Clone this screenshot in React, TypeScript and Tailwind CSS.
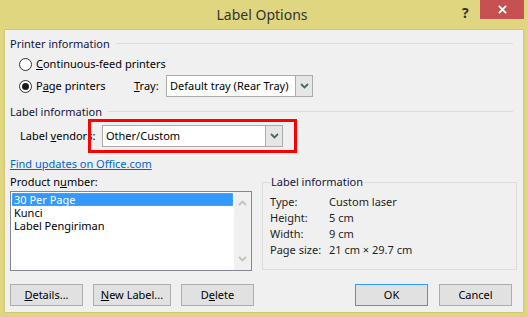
import React from "react";

const Chevron = ({ className = "" }: { className?: string }) => (
  <svg width="9" height="6" viewBox="0 0 9 6" className={className}>
    <path d="M1 1 L4.5 4.5 L8 1" fill="none" stroke="currentColor" strokeWidth="1.8" />
  </svg>
);

const Select = ({ text, width }: { text: string; width: string }) => (
  <div className={`flex h-[22px] ${width} items-stretch border border-[#acacac] bg-white`}>
    <div className="flex flex-1 items-center whitespace-nowrap pl-[3px] text-black">{text}</div>
    <div className="flex w-[17px] items-center justify-center border-l border-[#acacac] bg-[#e6e6e6] text-[#456b5a]">
      <Chevron />
    </div>
  </div>
);

const Heading = ({ children }: { children: React.ReactNode }) => (
  <div className="flex h-[16px] items-center pl-[5px] pr-[10px]">
    <span className="whitespace-nowrap leading-none text-[#14143c]">{children}</span>
    <div className="ml-[6px] h-px flex-1 bg-[#dcdcdc]" />
  </div>
);

const Radio = ({ checked }: { checked?: boolean }) => (
  <div className="flex h-[13px] w-[13px] shrink-0 items-center justify-center rounded-full border border-[#333] bg-white">
    {checked && <div className="h-[7px] w-[7px] rounded-full bg-[#1a1a1a]" />}
  </div>
);

const Btn = ({ children, w, primary }: { children: React.ReactNode; w: string; primary?: boolean }) => (
  <div
    className={`flex h-[22px] ${w} items-center justify-center whitespace-nowrap border ${
      primary ? "border-[#3399ff]" : "border-[#adadad]"
    } bg-[#e1e1e1] text-black`}
  >
    {children}
  </div>
);

export default function App() {
  return (
    <div
      className="flex h-[317px] w-[528px] flex-col bg-[#dfd67f] text-[11px] text-black"
      style={{ fontFamily: "'Noto Sans', sans-serif" }}
    >
      {/* title bar */}
      <div className="relative flex h-[29px] items-center justify-center">
        <span className="ml-[-4px] text-[14px] text-[#333333]">Label Options</span>
        <span className="absolute left-[462px] top-[2px] text-[14px] font-bold text-[#333]">?</span>
        <div className="absolute left-[480px] top-0 flex h-[19px] w-[44px] items-center justify-center bg-[#c75050] text-white">
          <svg width="9" height="9" viewBox="0 0 10 10">
            <path d="M1 1 L9 9 M9 1 L1 9" stroke="white" strokeWidth="2" />
          </svg>
        </div>
      </div>

      {/* client area */}
      <div className="mx-[4px] flex h-[284px] flex-col border border-[#cfc676] bg-[#f0f0f0]">
        <div className="mt-[5px]">
          <Heading>Printer information</Heading>
        </div>

        <div className="mt-[3px] flex h-[20px] items-center whitespace-nowrap pl-[14px]">
          <Radio />
          <span className="ml-[4px]">
            <u>C</u>ontinuous-feed printers
          </span>
        </div>

        <div className="mt-[1px] flex h-[22px] items-center whitespace-nowrap pl-[14px]">
          <Radio checked />
          <span className="ml-[4px] w-[98px]">
            P<u>a</u>ge printers
          </span>
          <span className="w-[32px]">
            <u>T</u>ray:
          </span>
          <Select text="Default tray (Rear Tray)" width="w-[147px]" />
        </div>

        <div className="mt-[6px]">
          <Heading>Label information</Heading>
        </div>

        <div className="relative flex h-[34px] items-center whitespace-nowrap pl-[15px]">
          <span className="w-[82px]">
            Label <u>v</u>endors:
          </span>
          <Select text="Other/Custom" width="w-[181px]" />
          <div className="pointer-events-none absolute left-[83px] top-0 h-[34px] w-[209px] border-[3px] border-[#ff0000]" />
        </div>

        <div className="mt-[3px] flex h-[16px] items-center pl-[5px]">
          <span className="text-[#0066cc] underline">Find updates on Office.com</span>
        </div>

        <div className="mt-[2px] flex">
          {/* left column */}
          <div className="ml-[5px] flex w-[242px] flex-col">
            <div className="flex h-[16px] items-center whitespace-nowrap">
              Product n<u>u</u>mber:
            </div>
            <div className="mt-px flex h-[80px] border border-[#828790] bg-white">
              <div className="flex flex-1 flex-col p-px leading-[12px]">
                <div className="flex h-[13px] items-center border border-dotted border-[#e08a2a] bg-[#3399ff] pl-[1px] leading-[11px] text-white">
                  30 Per Page
                </div>
                <div className="flex h-[13px] items-center pl-[2px]">Kunci</div>
                <div className="flex h-[13px] items-center pl-[2px]">Label Pengiriman</div>
              </div>
              <div className="flex w-[17px] flex-col items-center justify-between bg-[#f0f0f0] py-[8px] text-[#c2c2c2]">
                <Chevron className="rotate-180" />
                <Chevron />
              </div>
            </div>
          </div>

          {/* right group */}
          <div className="ml-[10px] mt-[8px] flex h-[88px] w-[255px] flex-col border border-[#dcdcdc] pl-[7px]">
            <div className="-mt-[9px] flex">
              <span className="bg-[#f0f0f0] px-[1px] leading-[16px] text-[#14143c]">Label information</span>
            </div>
            <div className="mt-[4px] flex flex-col text-[#1e1e1e]">
              {[
                ["Type:", "Custom laser"],
                ["Height:", "5 cm"],
                ["Width:", "9 cm"],
                ["Page size:", "21 cm × 29.7 cm"],
              ].map(([k, v]) => (
                <div key={k} className="flex h-[16px] items-center whitespace-nowrap">
                  <span className="w-[59px]">{k}</span>
                  <span>{v}</span>
                </div>
              ))}
            </div>
          </div>
        </div>

        <div className="mt-[13px] flex items-center justify-between pl-[5px] pr-[11px]">
          <div className="flex gap-[10px]">
            <Btn w="w-[73px]">
              <span>
                <u>D</u>etails...
              </span>
            </Btn>
            <Btn w="w-[78px]">
              <span>
                <u>N</u>ew Label...
              </span>
            </Btn>
            <Btn w="w-[73px]">
              <span>
                D<u>e</u>lete
              </span>
            </Btn>
          </div>
          <div className="flex gap-[11px]">
            <Btn w="w-[73px]" primary>
              OK
            </Btn>
            <Btn w="w-[73px]">Cancel</Btn>
          </div>
        </div>
      </div>
    </div>
  );
}
